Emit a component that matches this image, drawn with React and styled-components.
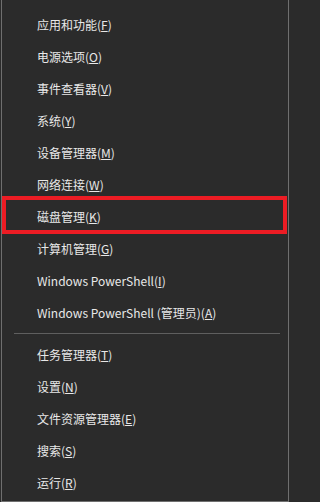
import React from "react";
import styled, { createGlobalStyle } from "styled-components";

const GlobalStyle = createGlobalStyle`
  html, body {
    margin: 0;
    padding: 0;
    background: #2b2b2b;
  }
`;

const groups = [
  [
    { label: "应用和功能", key: "F" },
    { label: "电源选项", key: "O" },
    { label: "事件查看器", key: "V" },
    { label: "系统", key: "Y" },
    { label: "设备管理器", key: "M" },
    { label: "网络连接", key: "W" },
    { label: "磁盘管理", key: "K", marked: true },
    { label: "计算机管理", key: "G" },
    { label: "Windows PowerShell", key: "I" },
    { label: "Windows PowerShell (管理员)", key: "A" },
  ],
  [
    { label: "任务管理器", key: "T" },
    { label: "设置", key: "N" },
    { label: "文件资源管理器", key: "E" },
    { label: "搜索", key: "S" },
    { label: "运行", key: "R" },
  ],
];

const App = () => {
  return (
    <>
      <GlobalStyle />
      <Menu>
        {groups.map((items, gi) => (
          <React.Fragment key={gi}>
            {gi > 0 && <Separator />}
            {items.map((item) => (
              <Item key={item.label} $marked={item.marked}>
                {item.label}(<Key>{item.key}</Key>)
              </Item>
            ))}
          </React.Fragment>
        ))}
      </Menu>
    </>
  );
};

const Menu = styled.div`
  box-sizing: border-box;
  width: 288px;
  height: 502px;
  margin-left: 1px;
  padding-top: 8px;
  background: #2b2b2b;
  border-left: 1px solid #6f6f6f;
  border-right: 1px solid #6f6f6f;
  border-bottom: 1px solid #6f6f6f;
  display: flex;
  flex-direction: column;
  font-family: "Noto Sans CJK SC", "Noto Sans", sans-serif;
  font-size: 12px;
  color: #e8e8e8;
`;

const Item = styled.div`
  position: relative;
  height: 32px;
  display: flex;
  align-items: center;
  padding-left: 35px;
  white-space: nowrap;

  &::after {
    content: "";
    display: ${(p) => (p.$marked ? "block" : "none")};
    position: absolute;
    top: -4px;
    bottom: -2px;
    left: 0;
    right: 1px;
    border: 4px solid #ec1c24;
  }
`;

const Key = styled.span`
  text-decoration: underline;
  text-underline-offset: 1px;
`;

const Separator = styled.div`
  height: 1px;
  margin: 5px 8px 4px 12px;
  background: #5f5f5f;
`;

export default App;
